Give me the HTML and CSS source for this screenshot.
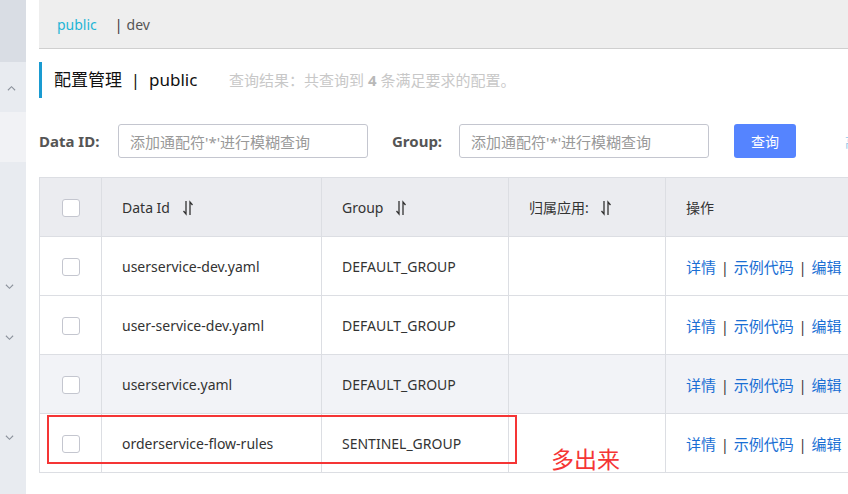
FILE: index.html
```html
<!DOCTYPE html>
<html>
<head>
<meta charset="utf-8">
<link rel="stylesheet" href="styles.css">
</head>
<body>
<div class="page">
  <aside class="sidebar">
    <div class="sb-top"></div>
    <div class="sb-item sb-open"><svg class="chev" viewBox="0 0 10 6"><path d="M1 5.5 L5 1.5 L9 5.5"/></svg></div>
    <div class="sb-item sb-light"></div>
    <div class="sb-rest">
      <svg class="chev c1" viewBox="0 0 10 6"><path d="M1 0.5 L5 4.5 L9 0.5"/></svg>
      <svg class="chev c2" viewBox="0 0 10 6"><path d="M1 0.5 L5 4.5 L9 0.5"/></svg>
      <svg class="chev c3" viewBox="0 0 10 6"><path d="M1 0.5 L5 4.5 L9 0.5"/></svg>
    </div>
  </aside>
  <main class="main">
    <div class="nsbar">
      <span class="ns-active">public</span>
      <span class="ns-sep">|</span><span class="ns">dev</span>
    </div>
    <div class="title">
      <span class="title-text">配置管理 &nbsp;|&nbsp; public</span>
      <span class="hint">查询结果：共查询到 <b>4</b> 条满足要求的配置。</span>
    </div>
    <div class="search">
      <label class="lbl">Data ID:</label>
      <div class="input">添加通配符'*'进行模糊查询</div>
      <label class="lbl lbl2">Group:</label>
      <div class="input">添加通配符'*'进行模糊查询</div>
      <button class="btn">查询</button>
      <span class="adv">高级查询</span>
    </div>
    <div class="table-wrap">
      <table class="tbl">
        <colgroup>
          <col class="w1"><col class="w2"><col class="w3"><col class="w4"><col class="w5">
        </colgroup>
        <thead>
          <tr>
            <th><span class="cb"></span></th>
            <th>Data Id <svg class="sort" viewBox="0 0 12 16"><path d="M4 1 V14 L1.5 11"/><path d="M8 15 V2 L10.5 5"/></svg></th>
            <th>Group <svg class="sort" viewBox="0 0 12 16"><path d="M4 1 V14 L1.5 11"/><path d="M8 15 V2 L10.5 5"/></svg></th>
            <th>归属应用: <svg class="sort" viewBox="0 0 12 16"><path d="M4 1 V14 L1.5 11"/><path d="M8 15 V2 L10.5 5"/></svg></th>
            <th>操作</th>
          </tr>
        </thead>
        <tbody>
          <tr>
            <td><span class="cb"></span></td>
            <td>userservice-dev.yaml</td>
            <td>DEFAULT_GROUP</td>
            <td></td>
            <td class="ops"><a>详情</a><i>|</i><a>示例代码</a><i>|</i><a>编辑</a></td>
          </tr>
          <tr>
            <td><span class="cb"></span></td>
            <td>user-service-dev.yaml</td>
            <td>DEFAULT_GROUP</td>
            <td></td>
            <td class="ops"><a>详情</a><i>|</i><a>示例代码</a><i>|</i><a>编辑</a></td>
          </tr>
          <tr class="hover">
            <td><span class="cb"></span></td>
            <td>userservice.yaml</td>
            <td>DEFAULT_GROUP</td>
            <td></td>
            <td class="ops"><a>详情</a><i>|</i><a>示例代码</a><i>|</i><a>编辑</a></td>
          </tr>
          <tr>
            <td><span class="cb"></span></td>
            <td>orderservice-flow-rules</td>
            <td>SENTINEL_GROUP</td>
            <td></td>
            <td class="ops"><a>详情</a><i>|</i><a>示例代码</a><i>|</i><a>编辑</a></td>
          </tr>
        </tbody>
      </table>
      <div class="mark-box"></div>
      <div class="mark-text">多出来</div>
    </div>
  </main>
</div>
</body>
</html>
```

FILE: styles.css
```css
html, body {
  margin: 0;
  padding: 0;
  width: 848px;
  height: 494px;
  overflow: hidden;
  background: #fff;
  font-family: "Noto Sans", "Noto Sans CJK SC", sans-serif;
  color: #333;
}
.page {
  display: flex;
  height: 494px;
}
.sidebar {
  width: 26px;
  flex: none;
  display: flex;
  flex-direction: column;
  background: #e8ebf0;
}
.sb-top { height: 62px; background: #d9dde4; }
.sb-item { height: 50px; display: flex; align-items: center; justify-content: center; }
.sb-open { background: #e8ebf0; }
.sb-light { background: #f1f2f5; }
.sb-rest { flex: 1; position: relative; background: #e8ebf0; }
.chev { width: 9px; height: 6px; fill: none; stroke: #8c929c; stroke-width: 1.2; }
.sb-open .chev { margin-left: -3px; margin-top: 2px; }
.sb-rest .chev { position: absolute; left: 5px; }
.c1 { top: 122px; }
.c2 { top: 173px; }
.c3 { top: 273px; }

.main {
  margin-left: 13px;
  flex: none;
  width: 1000px;
}
.nsbar {
  height: 49px;
  box-sizing: border-box;
  background: #eeeeee;
  border-bottom: 1px solid #cfcfcf;
  display: flex;
  align-items: center;
  padding-left: 18px;
  font-size: 14px;
}
.ns-active { color: #1fb5d6; }
.ns-sep { margin-left: 18px; color: #333; }
.ns { margin-left: 4px; color: #555; }

.title {
  margin-top: 13px;
  height: 36px;
  border-left: 3px solid #1a9bd1;
  display: flex;
  align-items: center;
  padding-left: 12px;
}
.title-text { font-size: 17px; color: #111; width: 175px; margin-top: -4px; }
.hint { font-size: 15px; color: #c8c8c8; margin-top: -2px; }
.hint b { font-weight: bold; color: #b8b8b8; }

.search {
  margin-top: 26px;
  display: flex;
  align-items: center;
  height: 34px;
}
.lbl {
  font-size: 15px;
  font-weight: bold;
  color: #555;
  width: 79px;
}
.lbl2 { margin-left: 24px; width: 67px; }
.input {
  width: 250px;
  height: 34px;
  box-sizing: border-box;
  border: 1px solid #c4c6cf;
  border-radius: 3px;
  font-size: 15px;
  color: #999;
  padding-left: 11px;
  display: flex;
  align-items: center;
}
.btn {
  margin-left: 25px;
  width: 62px;
  height: 34px;
  border: none;
  border-radius: 3px;
  background: #5584ff;
  color: #fff;
  font-family: inherit;
  font-size: 14px;
}
.adv { margin-left: 49px; font-size: 13px; color: #8fc7e8; }

.table-wrap {
  position: relative;
  margin-top: 19px;
}
.tbl {
  border-collapse: collapse;
  table-layout: fixed;
  width: 960px;
  font-size: 14px;
  color: #333;
}
.w1 { width: 62px; }
.w2 { width: 220px; }
.w3 { width: 187px; }
.w4 { width: 157px; }
.w5 { width: 334px; }
.tbl th, .tbl td {
  border: 1px solid #dcdee3;
  height: 59px;
  padding: 0 0 0 20px;
  text-align: left;
  font-weight: normal;
  box-sizing: border-box;
}
.tbl th:first-child, .tbl td:first-child { padding: 0; text-align: center; }
.tbl thead tr { background: #ebecf0; }
.tbl tr.hover { background: #f2f3f7; }
.cb {
  display: inline-block;
  width: 18px;
  height: 18px;
  box-sizing: border-box;
  border: 1px solid #c4c6cf;
  border-radius: 3px;
  background: #fff;
  vertical-align: middle;
}
.sort {
  width: 12px;
  height: 16px;
  fill: none;
  stroke: #333;
  stroke-width: 1.3;
  vertical-align: -3px;
  margin-left: 8px;
}
.ops { font-size: 15px; }
.ops a { color: #1a6fd4; }
.ops i { font-style: normal; color: #333; margin: 0 5px; font-size: 14px; }

.mark-box {
  position: absolute;
  left: 8px;
  top: 238px;
  width: 470px;
  height: 49px;
  border: 2px solid #f53535;
  box-sizing: border-box;
}
.mark-text {
  position: absolute;
  left: 512px;
  top: 266px;
  font-size: 23px;
  color: #f53535;
  line-height: 32px;
}
```
